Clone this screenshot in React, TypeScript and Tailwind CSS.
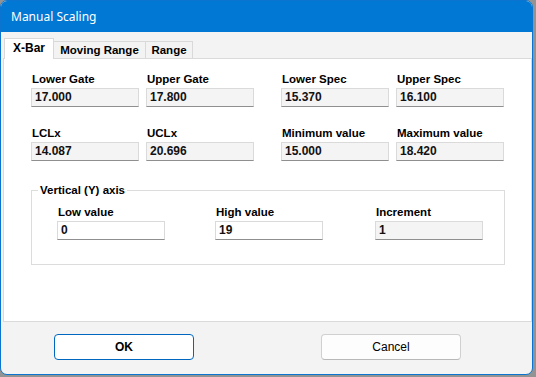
const Field = ({
  label,
  value,
  readOnly = true,
  className = "",
}: {
  label: string;
  value: string;
  readOnly?: boolean;
  className?: string;
}) => {
  return (
    <div className={"w-[108px] " + className}>
      <div className="h-[14px] leading-[14px] text-[11.5px] font-bold text-black whitespace-nowrap pl-[1px]">
        {label}
      </div>
      <div
        className={
          "mt-[2px] h-[19px] border border-[#dadada] border-b-[#8f8f8f] leading-[17px] text-[12px] font-bold text-[#111] pl-[3px] " +
          (readOnly ? "bg-[#f4f4f4]" : "bg-white")
        }
      >
        {value}
      </div>
    </div>
  );
};

const App = () => {
  return (
    <div className="w-[536px] h-[377px] bg-[#939393] font-['Liberation_Sans',Arial,sans-serif]">
      <div className="w-[533px] h-[375px] rounded-[7px] border border-[#0a74d0] bg-[#f3f3f3] overflow-hidden flex flex-col">
        {/* title bar */}
        <div className="h-[31px] shrink-0 bg-[#0078d4] flex items-center pl-[10px]">
          <span className="text-white text-[12px] font-['Noto_Sans',sans-serif]">Manual Scaling</span>
        </div>

        {/* tabs */}
        <div className="pt-[5px] pl-[3px] flex items-end h-[26px] shrink-0">
          <div className="relative z-10 w-[50px] h-[21px] -mb-[1px] bg-white border border-b-0 border-[#d9d9d9] text-[12px] font-bold leading-[18px] text-center">
            X-Bar
          </div>
          <div className="w-[93px] h-[17px] -ml-[1px] bg-[#f3f3f3] border border-b-0 border-[#d9d9d9] text-[11.5px] font-bold leading-[17px] text-center">
            Moving Range
          </div>
          <div className="w-[48px] h-[17px] -ml-[1px] bg-[#f3f3f3] border border-b-0 border-[#d9d9d9] text-[11.5px] font-bold leading-[17px] text-center">
            Range
          </div>
        </div>

        {/* tab panel */}
        <div className="ml-[2px] h-[264px] shrink-0 bg-white border border-[#dadada] pl-[27px] pt-[13px]">
          <div className="flex">
            <Field label="Lower Gate" value="17.000" />
            <Field label="Upper Gate" value="17.800" className="ml-[7px]" />
            <Field label="Lower Spec" value="15.370" className="ml-[27px]" />
            <Field label="Upper Spec" value="16.100" className="ml-[7px]" />
          </div>
          <div className="flex mt-[19px]">
            <Field label="LCLx" value="14.087" />
            <Field label="UCLx" value="20.696" className="ml-[7px]" />
            <Field label="Minimum value" value="15.000" className="ml-[27px]" />
            <Field label="Maximum value" value="18.420" className="ml-[7px]" />
          </div>

          <fieldset className="mt-[22px] w-[474px] h-[82px] border border-[#dcdcdc]">
            <legend className="ml-[6px] px-[2px] h-[14px] leading-[14px] text-[11.5px] font-bold text-black">
              Vertical (Y) axis
            </legend>
            <div className="flex pl-[25px] pt-[8px]">
              <Field label="Low value" value="0" readOnly={false} />
              <Field label="High value" value="19" readOnly={false} className="ml-[50px]" />
              <Field label="Increment" value="1" className="ml-[52px]" />
            </div>
          </fieldset>
        </div>

        {/* footer */}
        <div className="flex-1 pt-[12px] pl-[53px] flex items-start">
          <button className="w-[140px] h-[26px] rounded-[4px] border border-[#0067c0] bg-white text-[12px] font-bold text-black">
            OK
          </button>
          <button className="ml-[127px] w-[140px] h-[26px] rounded-[4px] border border-[#d0d0d0] border-b-[#b8b8b8] bg-[#fdfdfd] text-[12px] text-black">
            Cancel
          </button>
        </div>
      </div>
    </div>
  );
};

export default App;
